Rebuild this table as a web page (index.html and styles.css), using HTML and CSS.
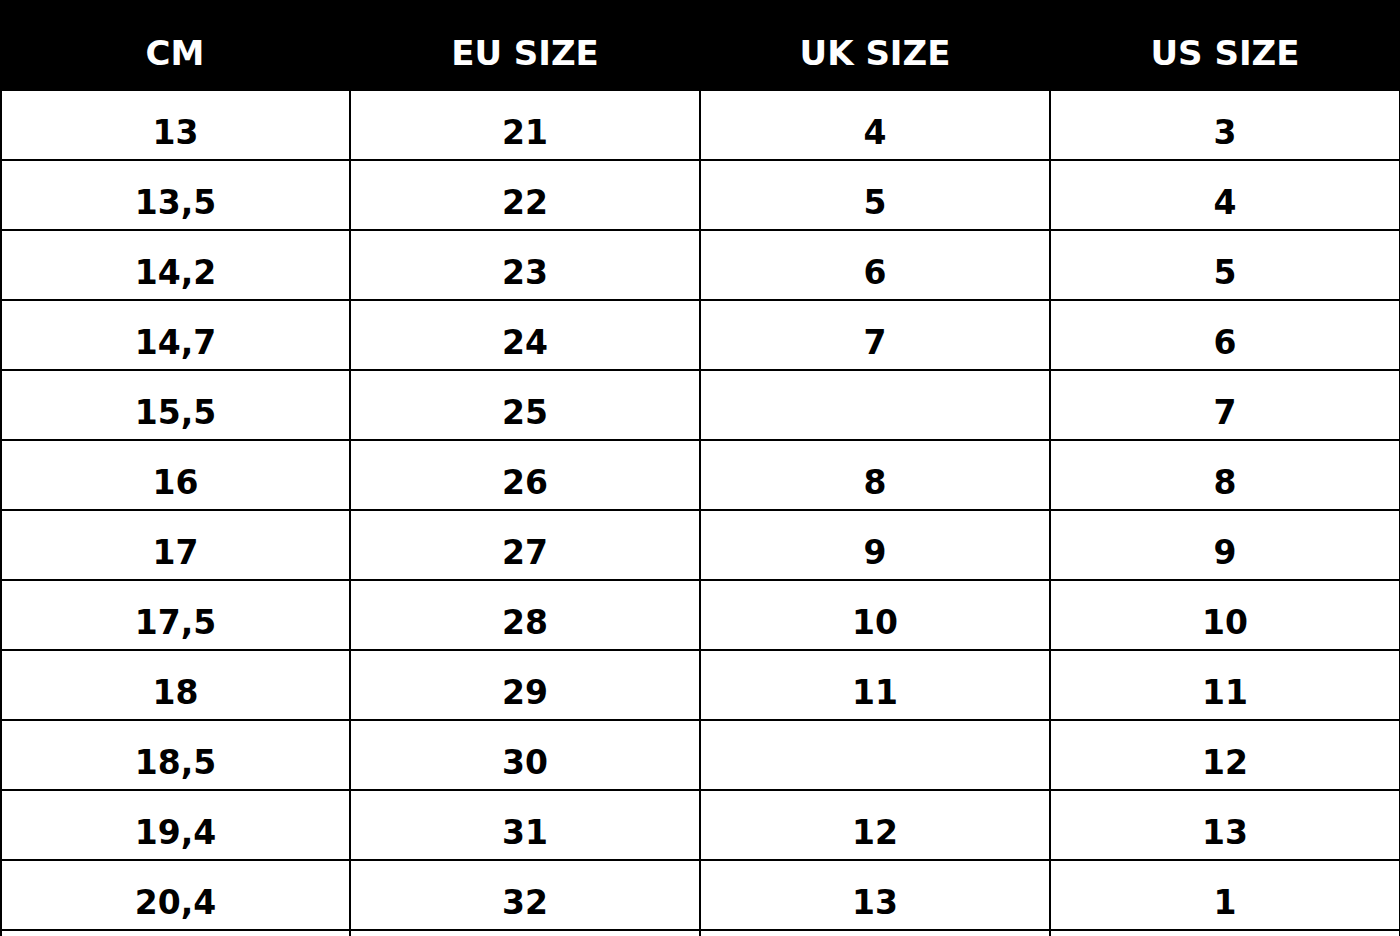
FILE: index.html
```html
<!DOCTYPE html>
<html lang="en">
<head>
<meta charset="utf-8">
<title>Size chart</title>
<link rel="stylesheet" href="styles.css">
</head>
<body>
<div class="chart">
  <div class="head">
    <div class="hcell">CM</div>
    <div class="hcell">EU SIZE</div>
    <div class="hcell">UK SIZE</div>
    <div class="hcell">US SIZE</div>
  </div>
  <div class="row"><div class="cell">13</div><div class="cell">21</div><div class="cell">4</div><div class="cell">3</div></div>
  <div class="row"><div class="cell">13,5</div><div class="cell">22</div><div class="cell">5</div><div class="cell">4</div></div>
  <div class="row"><div class="cell">14,2</div><div class="cell">23</div><div class="cell">6</div><div class="cell">5</div></div>
  <div class="row"><div class="cell">14,7</div><div class="cell">24</div><div class="cell">7</div><div class="cell">6</div></div>
  <div class="row"><div class="cell">15,5</div><div class="cell">25</div><div class="cell"></div><div class="cell">7</div></div>
  <div class="row"><div class="cell">16</div><div class="cell">26</div><div class="cell">8</div><div class="cell">8</div></div>
  <div class="row"><div class="cell">17</div><div class="cell">27</div><div class="cell">9</div><div class="cell">9</div></div>
  <div class="row"><div class="cell">17,5</div><div class="cell">28</div><div class="cell">10</div><div class="cell">10</div></div>
  <div class="row"><div class="cell">18</div><div class="cell">29</div><div class="cell">11</div><div class="cell">11</div></div>
  <div class="row"><div class="cell">18,5</div><div class="cell">30</div><div class="cell"></div><div class="cell">12</div></div>
  <div class="row"><div class="cell">19,4</div><div class="cell">31</div><div class="cell">12</div><div class="cell">13</div></div>
  <div class="row"><div class="cell">20,4</div><div class="cell">32</div><div class="cell">13</div><div class="cell">1</div></div>
  <div class="row"><div class="cell"></div><div class="cell"></div><div class="cell"></div><div class="cell"></div></div>
</div>
</body>
</html>
```
FILE: styles.css
```css
html, body {
  margin: 0;
  padding: 0;
  background: #fff;
  overflow: hidden;
}

.chart {
  width: 1400px;
  font-family: "DejaVu Sans", "Liberation Sans", sans-serif;
  font-weight: bold;
  font-size: 33px;
  line-height: 38px;
  color: #000;
}

.head {
  display: flex;
  height: 91px;
  background: #000;
  color: #fff;
  font-size: 34px;
}

.hcell {
  flex: 0 0 350px;
  box-sizing: border-box;
  padding-top: 34px;
  text-align: center;
}

.row {
  display: flex;
  height: 70px;
  box-sizing: border-box;
  border-bottom: 2px solid #000;
}

.cell {
  flex: 0 0 350px;
  box-sizing: border-box;
  border-right: 2px solid #000;
  padding-top: 23px;
  text-align: center;
}

.cell:first-child {
  flex-basis: 351px;
  border-left: 2px solid #000;
}
```
